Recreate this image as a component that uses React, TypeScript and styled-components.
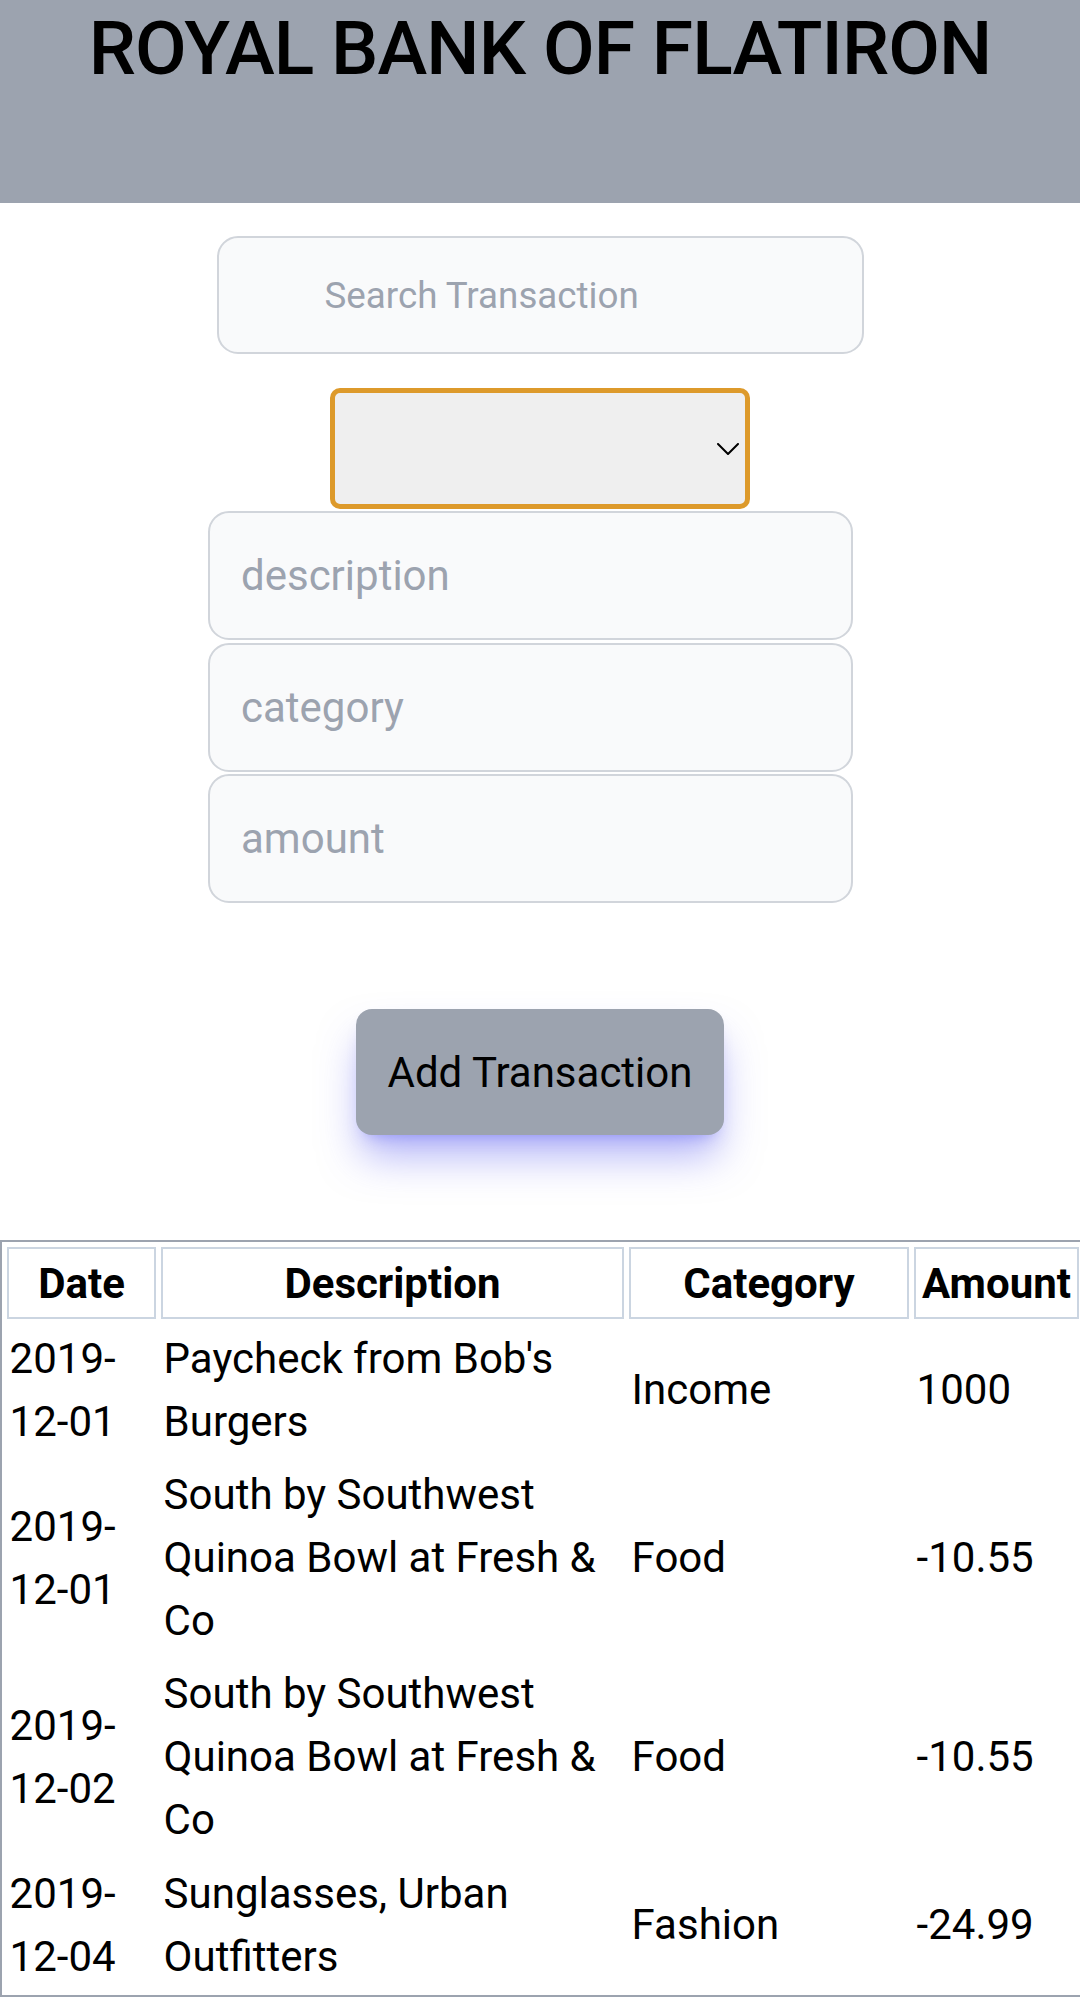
import styled, { createGlobalStyle } from 'styled-components';

const GlobalStyle = createGlobalStyle`
  html, body {
    margin: 0;
    padding: 0;
    background: #fff;
    font-family: Roboto, "Noto Sans", Arial, sans-serif;
    overflow-x: hidden;
  }
  * {
    box-sizing: border-box;
  }
`;

const transactions = [
  { id: 1, date: '2019-12-01', description: "Paycheck from Bob's Burgers", category: 'Income', amount: 1000 },
  { id: 2, date: '2019-12-01', description: 'South by Southwest Quinoa Bowl at Fresh & Co', category: 'Food', amount: -10.55 },
  { id: 3, date: '2019-12-02', description: 'South by Southwest Quinoa Bowl at Fresh & Co', category: 'Food', amount: -10.55 },
  { id: 4, date: '2019-12-04', description: 'Sunglasses, Urban Outfitters', category: 'Fashion', amount: -24.99 },
];

const Header = styled.header`
  height: 203px;
  background: #9ca3af;
  padding-top: 11px;
`;

const Title = styled.h1`
  margin: 0;
  font-size: 75px;
  line-height: 75px;
  font-weight: 500;
  letter-spacing: -0.9px;
  color: #000;
  text-align: center;
`;

const Main = styled.main`
  display: flex;
  flex-direction: column;
  align-items: center;
`;

const SearchInput = styled.input`
  margin-top: 33px;
  width: 647px;
  height: 118px;
  padding: 0 0 0 106px;
  border: 2.6px solid #d1d5db;
  border-radius: 21px;
  background: #f9fafb;
  font-family: Roboto, Arial, sans-serif;
  font-size: 36.75px;
  color: #111827;
  outline: none;
  &::placeholder {
    color: #9ca3af;
  }
`;

const SelectWrap = styled.div`
  position: relative;
  margin-top: 34px;
  width: 420px;
  height: 121px;
`;

const Select = styled.select`
  appearance: none;
  width: 100%;
  height: 100%;
  border: 5px solid #dd9a2b;
  border-radius: 10px;
  background: #efefef;
  font-family: Roboto, Arial, sans-serif;
  font-size: 42px;
  outline: none;
`;

const Chevron = styled.svg`
  position: absolute;
  right: 11px;
  top: 55px;
  width: 22px;
  height: 12px;
  pointer-events: none;
`;

const Fields = styled.form`
  display: flex;
  flex-direction: column;
  gap: 2.6px;
  margin-top: 2px;
  margin-right: 19px;
`;

const Field = styled.input`
  width: 645px;
  height: 129px;
  padding: 0 0 0 31px;
  border: 2.6px solid #d1d5db;
  border-radius: 21px;
  background: #f9fafb;
  font-family: Roboto, Arial, sans-serif;
  font-size: 42px;
  color: #111827;
  outline: none;
  &::placeholder {
    color: #9ca3af;
  }
`;

const AddButton = styled.button`
  margin-top: 106px;
  height: 126px;
  padding: 0 32px;
  border: none;
  border-radius: 16px;
  background: #9ca3af;
  color: #000;
  font-family: Roboto, Arial, sans-serif;
  font-size: 42px;
  line-height: 63px;
  box-shadow: 0 26px 42px -6px rgba(99, 102, 241, 0.5), 0 10px 16px -10px rgba(99, 102, 241, 0.5);
  cursor: pointer;
`;

const Table = styled.table`
  margin-top: 105px;
  width: 1086px;
  table-layout: fixed;
  border: 2px solid #9ca3af;
  border-spacing: 5.25px;
  font-size: 42px;
  line-height: 63px;
  color: #000;
`;

const Th = styled.th<{ $w?: number }>`
  ${(p) => (p.$w ? `width: ${p.$w}px;` : '')}
  border: 2.6px solid #cbd5e1;
  padding: 2.6px;
  font-weight: 700;
  text-align: center;
  white-space: nowrap;
`;

const Td = styled.td`
  padding: 2.6px;
  vertical-align: middle;
  text-align: left;
`;

export default function App() {
  return (
    <>
      <GlobalStyle />
      <Header>
        <Title>ROYAL BANK OF FLATIRON</Title>
      </Header>
      <Main>
        <SearchInput type="text" placeholder="Search Transaction" />
        <SelectWrap>
          <Select defaultValue="">
            <option value=""></option>
          </Select>
          <Chevron viewBox="0 0 22 12" fill="none">
            <path d="M1 1l10 10L21 1" stroke="#000" strokeWidth="2" strokeLinecap="round" strokeLinejoin="round" />
          </Chevron>
        </SelectWrap>
        <Fields>
          <Field type="text" name="description" placeholder="description" />
          <Field type="text" name="category" placeholder="category" />
          <Field type="number" name="amount" placeholder="amount" />
        </Fields>
        <AddButton type="button">Add Transaction</AddButton>
      </Main>
      <Table>
        <thead>
          <tr>
            <Th $w={149}>Date</Th>
            <Th $w={463}>Description</Th>
            <Th $w={280}>Category</Th>
            <Th>Amount</Th>
          </tr>
        </thead>
        <tbody>
          {transactions.map((t) => (
            <tr key={t.id}>
              <Td>{t.date}</Td>
              <Td>{t.description}</Td>
              <Td>{t.category}</Td>
              <Td>{t.amount}</Td>
            </tr>
          ))}
        </tbody>
      </Table>
    </>
  );
}
